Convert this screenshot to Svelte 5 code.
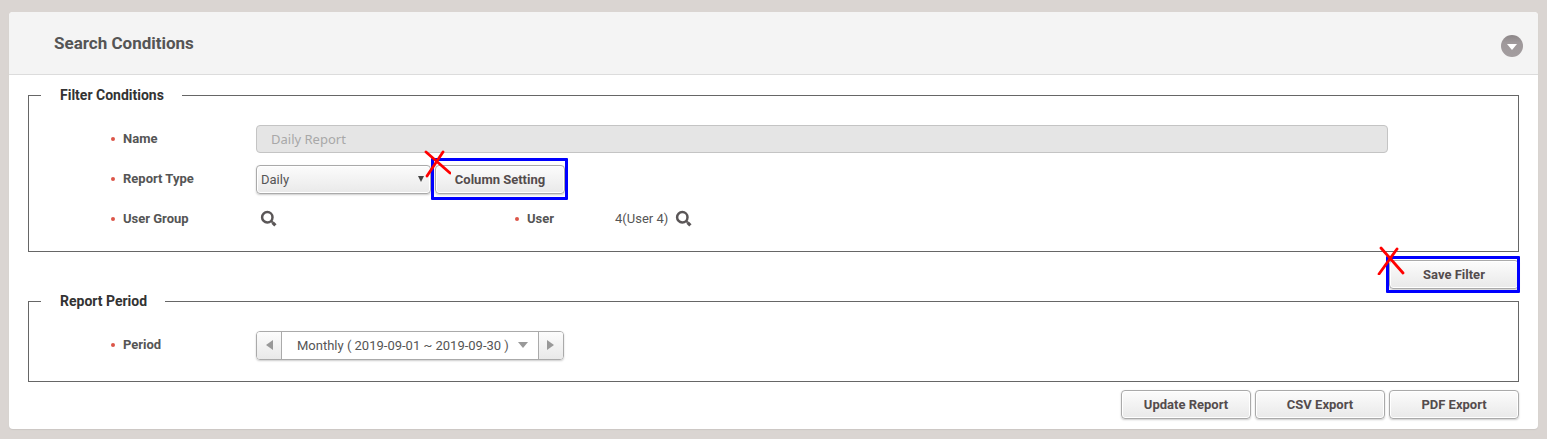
<script lang="ts">
	let name = $state('Daily Report');
	let reportType = $state('Daily');
	let open = $state(true);

	const reportTypes = ['Daily', 'Weekly', 'Monthly'];
	const actions = ['Update Report', 'CSV Export', 'PDF Export'];
</script>

{#snippet searchIcon()}
	<svg width="18" height="18" viewBox="0 0 18 18" aria-hidden="true">
		<circle cx="7.3" cy="7.3" r="5.2" fill="none" stroke="#5a5657" stroke-width="2.5" />
		<path d="M11 11l1.8 1.6" stroke="#5a5657" stroke-width="2" />
		<path d="M12.6 12.6l2.8 2.8" stroke="#5a5657" stroke-width="3.2" />
	</svg>
{/snippet}

{#snippet cross(lines: string)}
	<svg class="cross" width="28" height="30" viewBox="0 0 28 30" aria-hidden="true">
		<path d={lines} fill="none" stroke="#f00" stroke-width="2.8" stroke-linecap="round" />
	</svg>
{/snippet}

<section class="panel">
	<header>
		<h1>Search Conditions</h1>
		<button type="button" class="toggle" aria-label="Toggle search conditions" onclick={() => (open = !open)}>
			<svg width="22" height="22" viewBox="0 0 22 22" aria-hidden="true">
				<defs>
					<linearGradient id="knob" x1="0" y1="0" x2="0" y2="1">
						<stop offset="0" stop-color="#8c8688" />
						<stop offset="0.35" stop-color="#9f999b" />
						<stop offset="1" stop-color="#a39d9f" />
					</linearGradient>
				</defs>
				<circle cx="11" cy="11" r="11" fill="url(#knob)" />
				<path d="M6 9h10l-5 6z" fill="#fff" />
			</svg>
		</button>
	</header>

	{#if open}
		<form onsubmit={(e) => e.preventDefault()}>
			<fieldset>
				<legend>Filter Conditions</legend>
				<div class="row">
					<label class="label" for="name">Name</label>
					<input id="name" type="text" bind:value={name} disabled />
				</div>
				<div class="row">
					<label class="label" for="type">Report Type</label>
					<div class="group">
						<span class="select">
							<select id="type" bind:value={reportType}>
								{#each reportTypes as type (type)}
									<option>{type}</option>
								{/each}
							</select>
							<svg width="6" height="6" viewBox="0 0 6 6" aria-hidden="true">
								<path d="M0 0h6L3 6z" fill="#444" />
							</svg>
						</span>
						<span class="marked tall">
							<button type="button" class="btn">Column Setting</button>
							{@render cross('M3 2l24 21M20 2L4 26')}
						</span>
					</div>
				</div>
				<div class="row">
					<span class="label">User Group</span>
					<div class="group user-group">
						<button type="button" class="search" aria-label="Search user group">{@render searchIcon()}</button>
					</div>
					<span class="label short">User</span>
					<div class="group user">
						<span>4(User 4)</span>
						<button type="button" class="search" aria-label="Search user">{@render searchIcon()}</button>
					</div>
				</div>
			</fieldset>

			<div class="actions save">
				<span class="marked">
					<button type="submit" class="btn">Save Filter</button>
					{@render cross('M4 3l22 25M20 4L2 29')}
				</span>
			</div>

			<fieldset class="last">
				<legend>Report Period</legend>
				<div class="row">
					<span class="label">Period</span>
					<div class="period">
						<button type="button" class="step" aria-label="Previous period">
							<svg width="7" height="10" viewBox="0 0 7 10" aria-hidden="true"><path d="M7 0v10L0 5z" fill="#999" /></svg>
						</button>
						<button type="button" class="range">
							Monthly ( 2019-09-01 ~ 2019-09-30 )
							<svg width="10" height="6" viewBox="0 0 10 6" aria-hidden="true"><path d="M0 0h10L5 6z" fill="#999" /></svg>
						</button>
						<button type="button" class="step" aria-label="Next period">
							<svg width="7" height="10" viewBox="0 0 7 10" aria-hidden="true"><path d="M0 0v10l7-5z" fill="#999" /></svg>
						</button>
					</div>
				</div>
			</fieldset>

			<div class="actions">
				{#each actions as action (action)}
					<button type="button" class="btn">{action}</button>
				{/each}
			</div>
		</form>
	{/if}
</section>

<style>
	:global(body) {
		background: #dad5d2;
		font-family: Roboto, 'Liberation Sans', sans-serif;
		font-size: 13px;
		color: #555;
	}

	:global(#app) {
		display: flow-root;
	}

	* {
		box-sizing: border-box;
	}

	button,
	select {
		font: inherit;
		color: inherit;
	}

	button {
		padding: 0;
		border: none;
		background: none;
		cursor: pointer;
	}

	svg {
		display: block;
	}

	.panel {
		margin: 12px 9px 10px;
		background: #fff;
		border-radius: 4px;
		box-shadow: 0 1px 1px #cbc7c4;
	}

	header {
		display: flex;
		align-items: center;
		justify-content: space-between;
		height: 63px;
		padding: 0 15px 0 45px;
		background: #f4f4f4;
		border-bottom: 1px solid #dcdcdc;
		border-radius: 4px 4px 0 0;
	}

	h1 {
		margin: 0;
		font-size: 17px;
		font-weight: 700;
		line-height: 24px;
	}

	.toggle {
		margin-top: 6px;
	}

	form {
		padding: 10px 19px 10px;
	}

	fieldset {
		min-width: 0;
		margin: 0;
		padding: 14px 12px 12px;
		border: 1px solid #666;
	}

	fieldset.last {
		padding-bottom: 16px;
		margin-top: 2px;
	}

	legend {
		padding: 0 18px 0 19px;
		font-size: 14px;
		font-weight: 700;
		line-height: 20px;
		color: #333;
	}

	.row {
		display: flex;
		align-items: center;
		height: 40px;
		padding: 0 118px 0 70px;
	}

	.label {
		display: flex;
		align-items: center;
		gap: 8px;
		flex: none;
		width: 145px;
		padding-bottom: 1px;
		font-weight: 700;
	}

	.label::before {
		content: '';
		width: 4px;
		height: 4px;
		border-radius: 50%;
		background: #dc5548;
	}

	.label.short {
		width: 100px;
	}

	.group {
		display: flex;
		align-items: center;
		gap: 4px;
	}

	.user-group {
		width: 259px;
		padding-left: 4px;
	}

	.user {
		gap: 7px;
	}

	.user span {
		padding-bottom: 2px;
	}

	input {
		flex: 1;
		min-width: 0;
		height: 28px;
		padding: 0 14px;
		font-family: 'Noto Sans', 'Open Sans', sans-serif;
		font-size: 13px;
		color: #a8a8a8;
		background: #e5e5e5;
		border: 1px solid #c4c4c4;
		border-radius: 4px;
	}

	.select {
		position: relative;
	}

	.select svg {
		position: absolute;
		top: 11px;
		right: 7px;
		pointer-events: none;
	}

	select,
	.btn {
		height: 29px;
		border: 1px solid #aaa;
		border-radius: 4px;
		background: linear-gradient(#fcfcfc, #e9e9e9);
		box-shadow: inset 0 0 0 1px #fff, 0 1px 2px #ccc;
	}

	select {
		display: block;
		appearance: none;
		width: 175px;
		padding: 0 4px;
	}

	.btn {
		display: block;
		width: 130px;
		font-weight: 700;
		color: #544c4d;
	}

	.marked {
		position: relative;
	}

	.marked::after {
		content: '';
		position: absolute;
		inset: -4px -1px -4px -3px;
		border: 3px solid #00f;
		border-radius: 1px;
		pointer-events: none;
	}

	.marked.tall::after {
		inset: -7px -3px -6px -4px;
	}

	.cross {
		position: absolute;
		z-index: 1;
		top: -15px;
		left: -12px;
		pointer-events: none;
	}

	.actions {
		display: flex;
		justify-content: flex-end;
		gap: 4px;
		padding-top: 8px;
	}

	.period {
		display: flex;
		height: 29px;
		overflow: hidden;
		border: 1px solid #aaa;
		border-radius: 4px;
		box-shadow: 0 1px 2px #ccc;
	}

	.step {
		display: flex;
		align-items: center;
		justify-content: center;
		width: 24px;
		background: linear-gradient(#fcfcfc, #e9e9e9);
	}

	.range {
		display: flex;
		align-items: center;
		gap: 9px;
		padding: 0 10px 0 15px;
		border: solid #aaa;
		border-width: 0 1px;
		background: #fff;
	}
</style>
